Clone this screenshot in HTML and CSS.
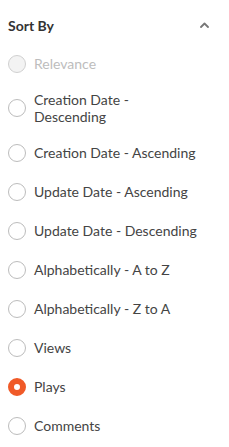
FILE: index.html
```html
<!DOCTYPE html>
<html>
<head>
<meta charset="utf-8">
<link rel="stylesheet" href="styles.css">
</head>
<body>
<div class="panel">
  <div class="header">
    <span class="title">Sort By</span>
    <svg class="chevron" width="9" height="6" viewBox="0 0 9 6"><path d="M1 5 L4.5 1.5 L8 5" fill="none" stroke="#777" stroke-width="1.8" stroke-linecap="round" stroke-linejoin="round"/></svg>
  </div>
  <ul class="list">
    <li class="item disabled"><span class="radio"></span><span class="label">Relevance</span></li>
    <li class="item"><span class="radio"></span><span class="label">Creation Date -<br>Descending</span></li>
    <li class="item"><span class="radio"></span><span class="label">Creation Date - Ascending</span></li>
    <li class="item"><span class="radio"></span><span class="label">Update Date - Ascending</span></li>
    <li class="item"><span class="radio"></span><span class="label">Update Date - Descending</span></li>
    <li class="item"><span class="radio"></span><span class="label">Alphabetically - A to Z</span></li>
    <li class="item"><span class="radio"></span><span class="label">Alphabetically - Z to A</span></li>
    <li class="item"><span class="radio"></span><span class="label">Views</span></li>
    <li class="item checked"><span class="radio"></span><span class="label">Plays</span></li>
    <li class="item"><span class="radio"></span><span class="label">Comments</span></li>
  </ul>
</div>
</body>
</html>
```
FILE: styles.css
```css
html, body {
  margin: 0;
  padding: 0;
  background: #ffffff;
}
body {
  font-family: Lato, "Open Sans", sans-serif;
  color: #333333;
}
.panel {
  padding: 0 8px;
}
.header {
  display: flex;
  align-items: center;
  justify-content: space-between;
  height: 38px;
  padding-top: 6px;
}
.title {
  font-size: 14px;
  font-weight: 700;
  color: #333333;
}
.chevron {
  margin-right: 12px;
  display: block;
}
.list {
  list-style: none;
  margin: 0;
  padding: 0;
}
.item {
  display: flex;
  align-items: center;
  gap: 8px;
  min-height: 39px;
  padding: 8px 0;
  box-sizing: border-box;
  font-size: 14px;
  line-height: 17px;
  color: #444444;
}
.radio {
  flex: none;
  width: 18px;
  height: 18px;
  box-sizing: border-box;
  border: 1px solid #bcbcbc;
  border-radius: 50%;
  background: #ffffff;
}
.disabled .radio {
  border-color: #d0d0d0;
  background: #f3f3f3;
}
.disabled .label {
  color: #bdbdbd;
}
.checked .radio {
  border: 6px solid #f05a28;
  background: #ffffff;
}
```
